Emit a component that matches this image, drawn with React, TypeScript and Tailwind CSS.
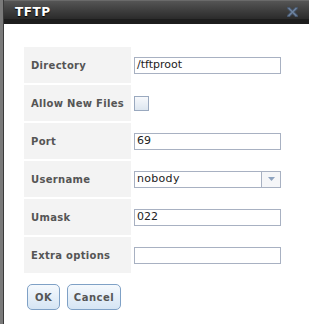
const labelCls =
  "w-[107px] h-[36px] bg-[#f3f3f3] flex items-center pl-[7px] text-[10px] font-bold tracking-[0.3px] text-[#555]";
const inputCls =
  "w-[147px] h-[17px] border border-[#a8b1c2] bg-white flex items-center px-[2px] text-[11px] text-[#222]";

function Row({ label, children }: { label: string; children?: React.ReactNode }) {
  return (
    <div className="flex items-center gap-[3px]">
      <div className={labelCls}>{label}</div>
      {children}
    </div>
  );
}

function CloseIcon() {
  return (
    <svg width="11" height="10" viewBox="0 0 11 10">
      <path d="M1.5 1 L9.5 9 M9.5 1 L1.5 9" stroke="#465569" strokeWidth="3.2" strokeLinecap="square" />
      <path d="M1.5 1 L9.5 9 M9.5 1 L1.5 9" stroke="#6e84a0" strokeWidth="1.4" />
    </svg>
  );
}

export default function App() {
  return (
    <div
      className="flex w-[309px] h-[324px] bg-white"
      style={{ fontFamily: '"DejaVu Sans", Verdana, sans-serif' }}
    >
      {/* left edge of the page behind the dialog */}
      <div className="w-[3px] bg-[#7a7a7a] border-r border-[#3a3a3a] box-content" />

      <div className="flex-1 flex flex-col">
        {/* title bar */}
        <div className="h-[24px] flex items-center justify-between pl-[11px] pr-[11px] border-t border-[#6a6a6a] bg-[linear-gradient(to_bottom,#555_0%,#3c3c3c_45%,#2b2b2b_78%,#1d1d1d_80%,#1d1d1d_100%)]">
          <span className="text-white text-[12px] font-bold tracking-[0.6px] [text-shadow:0_1px_1px_#000] -mt-[2px]">
            TFTP
          </span>
          <span className="-mt-[2px]">
            <CloseIcon />
          </span>
        </div>

        {/* form */}
        <div className="flex flex-col gap-[2px] pl-[20px] pt-[23px]">
          <Row label="Directory">
            <div className={inputCls}>/tftproot</div>
          </Row>
          <Row label="Allow New Files">
            <div className="w-[15px] h-[15px] border border-[#9aa9bf] bg-[linear-gradient(to_bottom,#f7f9fc,#dde6f0)]" />
          </Row>
          <Row label="Port">
            <div className={inputCls}>69</div>
          </Row>
          <Row label="Username">
            <div className="w-[147px] h-[17px] border border-[#a8b1c2] bg-white flex items-stretch text-[11px] text-[#222]">
              <div className="flex-1 flex items-center px-[2px] tracking-[0.3px]">nobody</div>
              <div className="w-[19px] border-l border-[#a8b1c2] bg-[#f5f6f8] flex items-center justify-center">
                <svg width="7" height="4" viewBox="0 0 7 4">
                  <path d="M0 0 H7 L3.5 4 Z" fill="#8ea3bf" />
                </svg>
              </div>
            </div>
          </Row>
          <Row label="Umask">
            <div className={inputCls}>022</div>
          </Row>
          <Row label="Extra options">
            <div className={inputCls} />
          </Row>

          {/* buttons */}
          <div className="flex gap-[7px] pl-[3px] pt-[9px]">
            <button className="w-[33px] h-[26px] rounded-[5px] border border-[#7fa1c6] bg-[linear-gradient(to_bottom,#f5f9fd,#d5e5f4)] text-[10px] font-bold tracking-[0.5px] text-[#555]">
              OK
            </button>
            <button className="w-[54px] h-[26px] rounded-[5px] border border-[#7fa1c6] bg-[linear-gradient(to_bottom,#f5f9fd,#d5e5f4)] text-[10px] font-bold tracking-[0.5px] text-[#555]">
              Cancel
            </button>
          </div>
        </div>
      </div>
    </div>
  );
}
